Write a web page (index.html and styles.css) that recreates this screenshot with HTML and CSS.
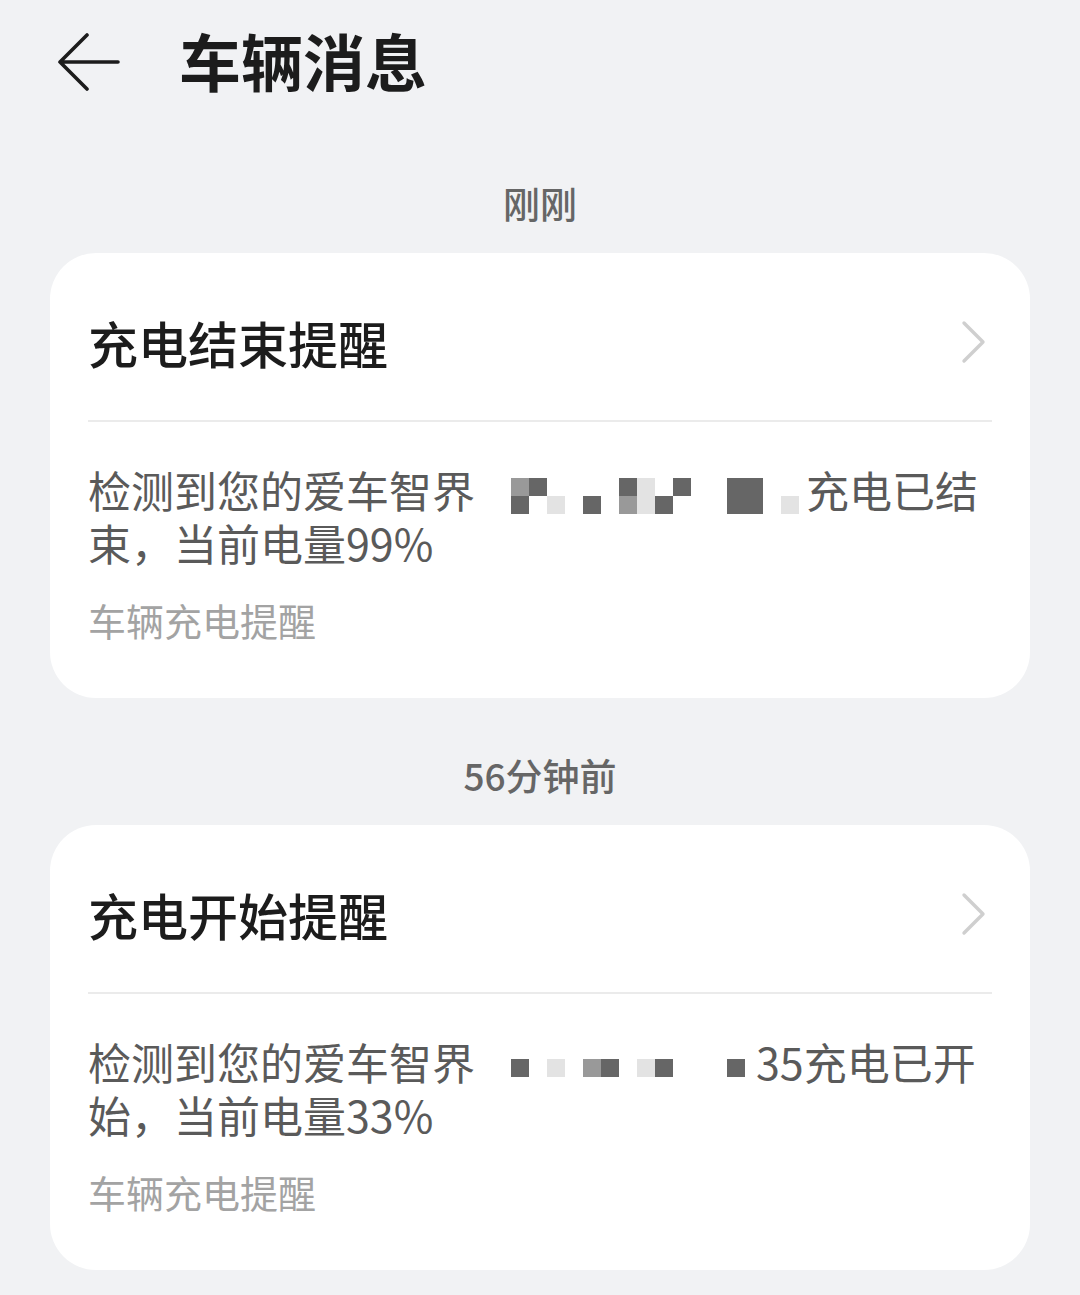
FILE: index.html
```html
<!DOCTYPE html>
<html lang="zh-CN">
<head>
    <meta charset="UTF-8">
    <title>车辆消息</title>
    <link rel="stylesheet" href="styles.css">
</head>
<body>
    <div class="header">
        <svg class="back" width="66" height="60" viewBox="0 0 66 60">
            <path d="M62 29 H4 M31 2 L4 29 L31 56" fill="none" stroke="#1c1c1c" stroke-width="3.6" stroke-linecap="round" stroke-linejoin="round"/>
        </svg>
        <h1>车辆消息</h1>
    </div>

    <div class="time">刚刚</div>
    <div class="card">
        <div class="card-title">
            <span>充电结束提醒</span>
            <svg class="chevron" width="30" height="44" viewBox="0 0 30 44">
                <path d="M4 3 L23 22 L4 41" fill="none" stroke="#cfcfcf" stroke-width="3.4" stroke-linecap="round" stroke-linejoin="round"/>
            </svg>
        </div>
        <div class="card-body">
            <!-- plate number is masked in the screenshot -->
            <p class="msg">检测到您的爱车智界<span class="mosaic m1"><i></i><i></i><i class="g"></i><i class="d"></i><i></i><i></i><i></i><i></i><i class="d"></i><i class="l"></i><i></i><i class="d"></i><i></i><i></i><i class="d"></i><i class="d"></i><i></i><i></i><i></i><i></i><i class="d"></i><i></i><i class="l"></i><i></i><i class="d"></i><i></i><i class="g"></i><i class="l"></i><i class="d"></i><i></i><i></i><i></i><i class="d"></i><i class="d"></i><i></i><i class="l"></i></span>充电已结束，当前电量99%</p>
            <p class="tag">车辆充电提醒</p>
        </div>
    </div>

    <div class="time">56分钟前</div>
    <div class="card">
        <div class="card-title">
            <span>充电开始提醒</span>
            <svg class="chevron" width="30" height="44" viewBox="0 0 30 44">
                <path d="M4 3 L23 22 L4 41" fill="none" stroke="#cfcfcf" stroke-width="3.4" stroke-linecap="round" stroke-linejoin="round"/>
            </svg>
        </div>
        <div class="card-body">
            <p class="msg">检测到您的爱车智界<span class="mosaic m2"><i></i><i></i><i class="d"></i><i></i><i class="l"></i><i></i><i class="g"></i><i class="d"></i><i></i><i class="l"></i><i class="d"></i><i></i><i></i><i></i><i class="d"></i></span>35充电已开始，当前电量33%</p>
            <p class="tag">车辆充电提醒</p>
        </div>
    </div>
</body>
</html>
```

FILE: styles.css
```css
body {
    margin: 0;
    padding: 0 0 26px;
    background-color: #f1f2f4;
    font-family: "Noto Sans CJK SC", "Noto Sans", sans-serif;
    color: #1c1c1c;
}
.header {
    display: flex;
    align-items: center;
    height: 126px;
    padding-left: 56px;
}
.back {
    margin-right: 57px;
}
h1 {
    margin: 0 0 6px;
    font-size: 62px;
    font-weight: 700;
    line-height: 80px;
}
.time {
    text-align: center;
    font-size: 37px;
    font-weight: 500;
    line-height: 50px;
    color: #666;
    margin: 52px 0 25px;
}
.card {
    margin: 0 50px;
    background: #fff;
    border-radius: 46px;
    padding: 0 38px 53px;
}
.card-title {
    display: flex;
    justify-content: space-between;
    align-items: center;
    padding: 59px 0 48px;
    font-size: 50px;
    font-weight: 500;
    line-height: 60px;
    border-bottom: 2px solid #ebebeb;
}
.chevron {
    margin-right: 2px;
}
.card-body {
    padding-top: 41px;
}
.msg {
    margin: 0;
    font-size: 43px;
    line-height: 53px;
    color: #5a5a5a;
    word-break: break-all;
}
.tag {
    margin: 26px 0 0;
    font-size: 38px;
    line-height: 50px;
    color: #a3a3a3;
}
.mosaic {
    display: inline-grid;
    grid-auto-rows: 18px;
    vertical-align: middle;
}
.m1 {
    grid-template-columns: repeat(18, 18px);
    margin-right: 7px;
}
.m2 {
    grid-template-columns: repeat(15, 18px);
    margin-right: 11px;
}
.mosaic i {
    display: block;
    background: #fff;
}
.mosaic i.d { background: #666; }
.mosaic i.g { background: #999; }
.mosaic i.l { background: #e3e3e3; }
```
